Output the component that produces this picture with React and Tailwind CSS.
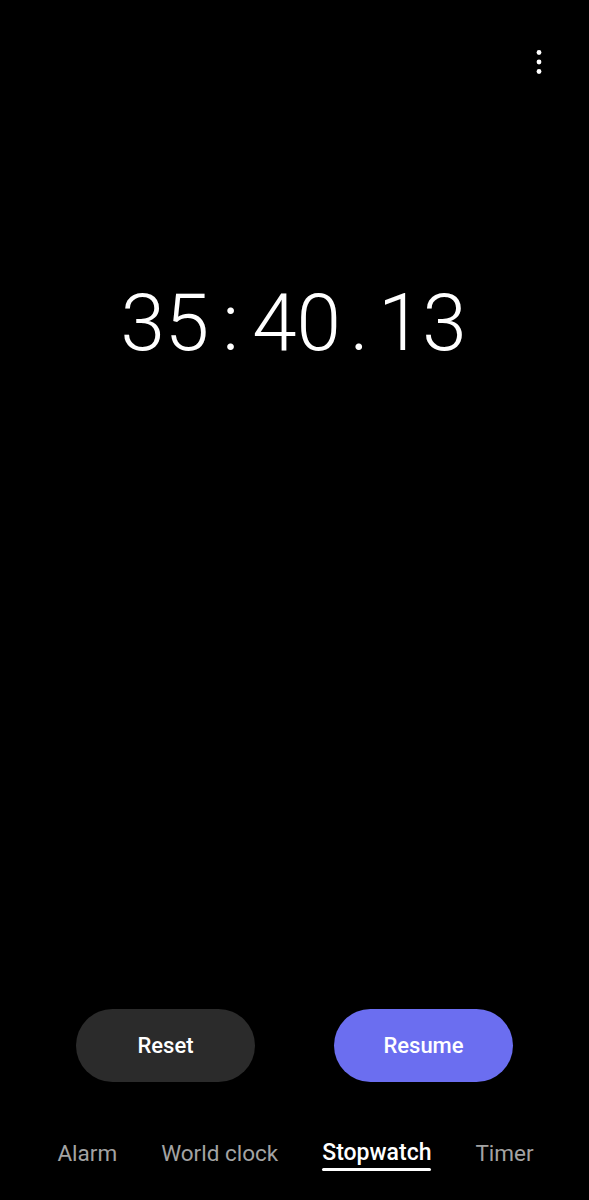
import React from "react";

export default function App() {
  const tabs = ["Alarm", "World clock", "Stopwatch", "Timer"];
  return (
    <div
      className="w-[589px] h-[1200px] bg-black flex flex-col text-white overflow-hidden"
      style={{ fontFamily: "Roboto, 'Noto Sans', sans-serif" }}
    >
      <div className="flex justify-end pt-[48px] pr-[46px]">
        <svg width="8" height="26" viewBox="0 0 8 26">
          <circle cx="4" cy="4.5" r="2.4" fill="#fff" />
          <circle cx="4" cy="14" r="2.4" fill="#fff" />
          <circle cx="4" cy="23.5" r="2.4" fill="#fff" />
        </svg>
      </div>

      <div className="mt-[209px] flex justify-center pr-[2px] text-[80px] leading-none font-light tracking-normal">
        <span>35</span>
        <span className="w-[43px] text-center">:</span>
        <span>40</span>
        <span className="w-[37px] text-center">.</span>
        <span>13</span>
      </div>

      <div className="flex-1" />

      <div className="flex justify-between px-[76px]">
        <button className="w-[179px] h-[73px] rounded-full bg-[#2b2b2b] text-white text-[22px] font-medium">
          Reset
        </button>
        <button className="w-[179px] h-[73px] rounded-full bg-[#6b6ef0] text-white text-[22px] font-medium">
          Resume
        </button>
      </div>

      <div className="mt-[58px] mb-[32px] flex justify-center gap-[44px] pl-[2px]">
        {tabs.map((t) => (
          <div key={t} className="relative">
            <span
              className={
                "leading-[26px] " +
                (t === "Stopwatch"
                  ? "text-[23px] text-white font-medium"
                  : "text-[22.5px] text-[#a3a3a3]")
              }
            >
              {t}
            </span>
            {t === "Stopwatch" && (
              <div className="absolute left-0 right-0 top-[28px] h-[3px] rounded-full bg-white" />
            )}
          </div>
        ))}
      </div>
    </div>
  );
}
